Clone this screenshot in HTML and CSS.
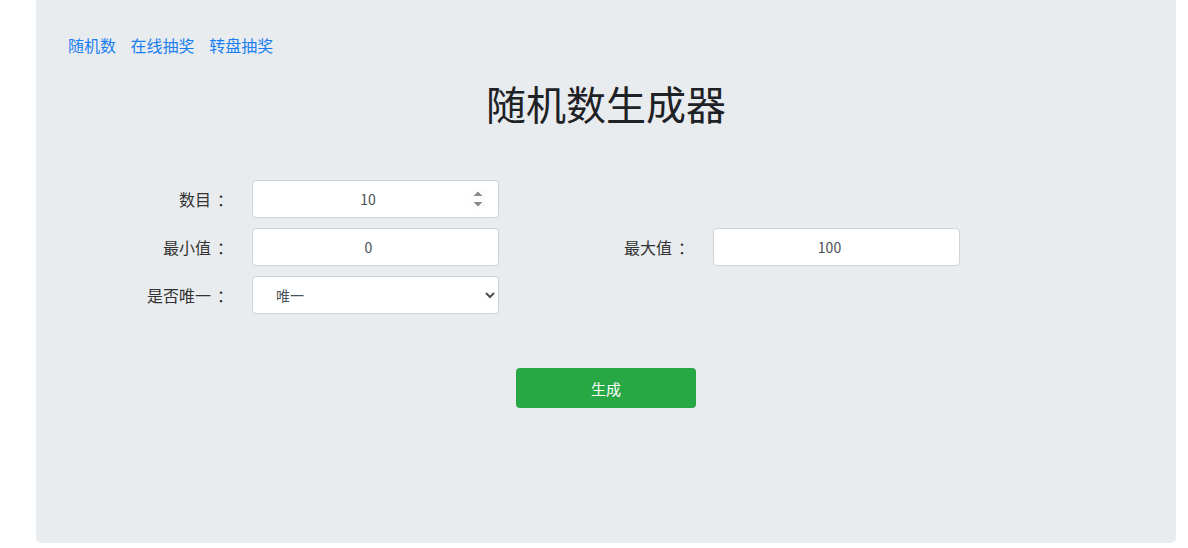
FILE: index.html
```html
<!DOCTYPE html>
<html lang="zh-CN">
<head>
  <meta charset="UTF-8">
  <title>随机数生成器</title>
  <link rel="stylesheet" href="styles.css">
</head>
<body>
  <div class="jumbotron">
    <nav class="top-links">
      <a href="#">随机数</a>
      <a href="#">在线抽奖</a>
      <a href="#">转盘抽奖</a>
    </nav>
    <h1>随机数生成器</h1>
    <form class="rand-form" onsubmit="return false">
      <div class="form-row">
        <label for="count">数目<span class="colon">：</span></label>
        <input type="number" id="count" class="num-input" value="10">
      </div>
      <div class="form-row">
        <label for="min">最小值<span class="colon">：</span></label>
        <input type="text" id="min" value="0">
        <label for="max">最大值<span class="colon">：</span></label>
        <input type="text" id="max" value="100">
      </div>
      <div class="form-row">
        <label for="unique">是否唯一<span class="colon">：</span></label>
        <select id="unique">
          <option>唯一</option>
          <option>不唯一</option>
        </select>
      </div>
      <div class="actions">
        <button type="submit">生成</button>
      </div>
    </form>
  </div>
</body>
</html>
```

FILE: styles.css
```css
body {
  margin: 0;
  padding: 0 12px 0 36px;
  background-color: #fff;
  font-family: "Noto Sans CJK SC", "Noto Sans", sans-serif;
  color: #212529;
}
.jumbotron {
  max-width: 1140px;
  box-sizing: border-box;
  height: 543px;
  padding: 33px 32px 0;
  background-color: #e9ecef;
  border-radius: 0 0 5px 5px;
}
.top-links {
  font-size: 16px;
  line-height: 24px;
}
.top-links a {
  color: #1a7ff0;
  text-decoration: none;
  margin-right: 11px;
}
h1 {
  margin: 22px 0 0;
  text-align: center;
  font-size: 40px;
  line-height: 48px;
  font-weight: 400;
  color: #1e2125;
}
.rand-form {
  margin-top: 53px;
}
.form-row {
  display: grid;
  grid-template-columns: 154px 247px 154px 247px;
  column-gap: 30px;
  margin-bottom: 10px;
  align-items: center;
}
.form-row label {
  text-align: right;
  margin-right: -11px;
  font-size: 16px;
  color: #333;
}
.form-row .colon {
  margin-left: 6px;
}
.form-row input,
.form-row select {
  box-sizing: border-box;
  height: 38px;
  border: 1px solid #ced4da;
  border-radius: 4px;
  background-color: #fff;
  font-family: inherit;
  font-size: 14px;
  color: #495057;
}
.form-row input {
  text-align: center;
  padding: 0 26px 0 12px;
}
.form-row .num-input {
  padding: 0 12px;
}
.num-input::-webkit-inner-spin-button {
  opacity: 1;
}
.form-row select {
  padding-left: 19px;
}
.actions {
  margin-top: 54px;
  text-align: center;
}
button {
  width: 180px;
  height: 40px;
  background-color: #28a745;
  color: #fff;
  border: none;
  border-radius: 4px;
  font-family: inherit;
  font-size: 15px;
  cursor: pointer;
}
```
